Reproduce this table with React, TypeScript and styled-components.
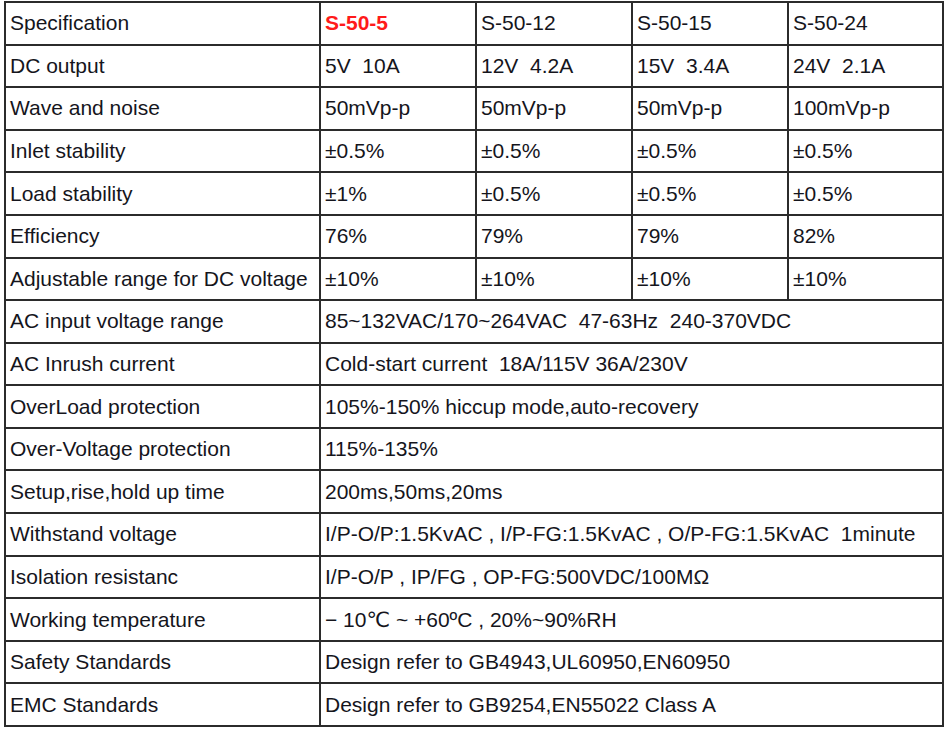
import React from "react";
import styled, { createGlobalStyle } from "styled-components";

const Global = createGlobalStyle`
  html, body { margin: 0; padding: 0; background: #ffffff; }
  body { font-family: "Liberation Sans", Arial, sans-serif; }
`;

const Page = styled.div`
  width: 950px;
  height: 733px;
  padding: 1px 0 0 4px;
  box-sizing: border-box;
  background: #ffffff;
`;

const Grid = styled.div`
  width: 940px;
  height: 726px;
  box-sizing: border-box;
  display: grid;
  grid-template-columns: 313px 154px 154px 154px 153px;
  grid-template-rows: repeat(17, 1fr);
  gap: 2px;
  padding: 2px;
  background: #2b2b2b;
`;

const Cell = styled.div<{ $span?: number; $red?: boolean }>`
  background: #ffffff;
  grid-column: span ${(p) => p.$span ?? 1};
  display: flex;
  align-items: center;
  padding-left: 4px;
  font-family: "Liberation Sans", Arial, "DejaVu Sans", sans-serif;
  font-size: 21px;
  white-space: pre;
  overflow: hidden;
  color: ${(p) => (p.$red ? "#ff1a1a" : "#15151c")};
  font-weight: ${(p) => (p.$red ? 700 : 400)};
`;

type Row = { label: string; values: string[] };

const splitRows: Row[] = [
  { label: "Specification", values: ["S-50-5", "S-50-12", "S-50-15", "S-50-24"] },
  { label: "DC output", values: ["5V  10A", "12V  4.2A", "15V  3.4A", "24V  2.1A"] },
  { label: "Wave and noise", values: ["50mVp-p", "50mVp-p", "50mVp-p", "100mVp-p"] },
  { label: "Inlet stability", values: ["±0.5%", "±0.5%", "±0.5%", "±0.5%"] },
  { label: "Load stability", values: ["±1%", "±0.5%", "±0.5%", "±0.5%"] },
  { label: "Efficiency", values: ["76%", "79%", "79%", "82%"] },
  { label: "Adjustable range for DC voltage", values: ["±10%", "±10%", "±10%", "±10%"] },
];

const spanRows: [string, string][] = [
  ["AC input voltage range", "85~132VAC/170~264VAC  47-63Hz  240-370VDC"],
  ["AC Inrush current", "Cold-start current  18A/115V 36A/230V"],
  ["OverLoad protection", "105%-150% hiccup mode,auto-recovery"],
  ["Over-Voltage protection", "115%-135%"],
  ["Setup,rise,hold up time", "200ms,50ms,20ms"],
  ["Withstand voltage", "I/P-O/P:1.5KvAC , I/P-FG:1.5KvAC , O/P-FG:1.5KvAC  1minute"],
  ["Isolation resistanc", "I/P-O/P , IP/FG , OP-FG:500VDC/100MΩ"],
  ["Working temperature", "− 10℃ ~ +60ºC , 20%~90%RH"],
  ["Safety Standards", "Design refer to GB4943,UL60950,EN60950"],
  ["EMC Standards", "Design refer to GB9254,EN55022 Class A"],
];

export default function App() {
  return (
    <Page>
      <Global />
      <Grid>
        {splitRows.map((r, i) => (
          <React.Fragment key={r.label}>
            <Cell>{r.label}</Cell>
            {r.values.map((v, j) => (
              <Cell key={j} $red={i === 0 && j === 0}>
                {v}
              </Cell>
            ))}
          </React.Fragment>
        ))}
        {spanRows.map(([label, value]) => (
          <React.Fragment key={label}>
            <Cell>{label}</Cell>
            <Cell $span={4}>{value}</Cell>
          </React.Fragment>
        ))}
      </Grid>
    </Page>
  );
}
